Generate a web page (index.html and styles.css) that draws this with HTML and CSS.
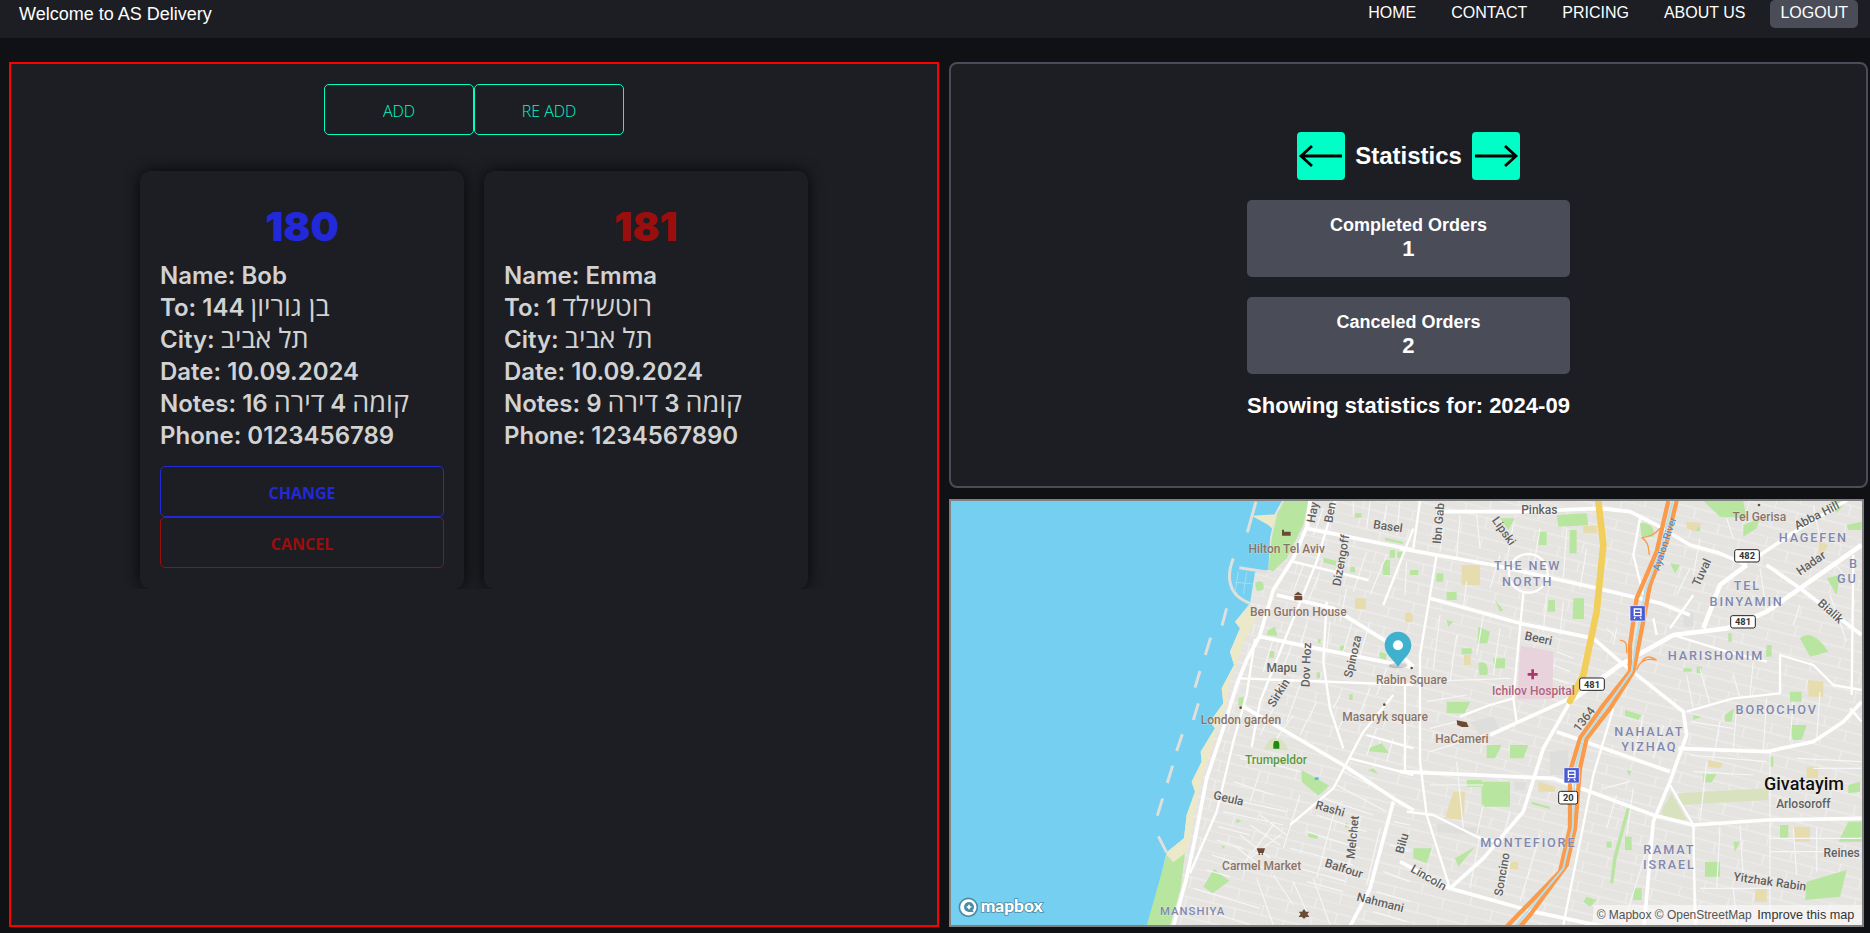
FILE: index.html
```html
<!DOCTYPE html>
<html lang="en">
<head>
    <meta charset="UTF-8">
    <meta name="viewport" content="width=device-width, initial-scale=1.0">
    <title>AS Delivery</title>
    <link rel="stylesheet" href="styles.css">
</head>
<body>
    <nav class="navbar">
        <h3 class="brand">Welcome to AS Delivery</h3>
        <div class="nav-links">
            <a href="#">HOME</a>
            <a href="#">CONTACT</a>
            <a href="#">PRICING</a>
            <a href="#">ABOUT US</a>
            <a href="#" class="logout">LOGOUT</a>
        </div>
    </nav>

    <main class="dashboard">
        <section class="orders-panel">
            <div class="order-actions">
                <button class="btn-add">ADD</button>
                <button class="btn-add">RE ADD</button>
            </div>
            <div class="orders">
                <article class="order-card">
                    <h2 class="order-id blue">180</h2>
                    <p>Name: Bob</p>
                    <p>To: <span dir="rtl"><span class="he">בן גוריון</span> 144</span></p>
                    <p>City: <span dir="rtl" class="he">תל אביב</span></p>
                    <p>Date: 10.09.2024</p>
                    <p>Notes: <span dir="rtl"><span class="he">קומה</span> 4 <span class="he">דירה</span> 16</span></p>
                    <p>Phone: 0123456789</p>
                    <div class="card-buttons">
                        <button class="btn-card blue">CHANGE</button>
                        <button class="btn-card red">CANCEL</button>
                    </div>
                </article>
                <article class="order-card">
                    <h2 class="order-id red">181</h2>
                    <p>Name: Emma</p>
                    <p>To: <span dir="rtl"><span class="he">רוטשילד</span> 1</span></p>
                    <p>City: <span dir="rtl" class="he">תל אביב</span></p>
                    <p>Date: 10.09.2024</p>
                    <p>Notes: <span dir="rtl"><span class="he">קומה</span> 3 <span class="he">דירה</span> 9</span></p>
                    <p>Phone: 1234567890</p>
                </article>
            </div>
        </section>

        <div class="side">
            <section class="stats-panel">
                <div class="stats-body">
                    <div class="stats-head">
                        <button class="arrow" aria-label="Previous month">
                            <svg viewBox="0 0 48 48"><path d="M45 24H4M15 14L4 24L15 34"/></svg>
                        </button>
                        <h2>Statistics</h2>
                        <button class="arrow" aria-label="Next month">
                            <svg viewBox="0 0 48 48"><path d="M3 24H44M33 14L44 24L33 34"/></svg>
                        </button>
                    </div>
                    <div class="stat-box">
                        <div class="stat-title">Completed Orders</div>
                        <div class="stat-value">1</div>
                    </div>
                    <div class="stat-box">
                        <div class="stat-title">Canceled Orders</div>
                        <div class="stat-value">2</div>
                    </div>
                    <p class="stats-note">Showing statistics for: 2024-09</p>
                </div>
            </section>

            <section class="map">
                <svg class="map-svg" viewBox="0 0 912 424" preserveAspectRatio="xMinYMin slice">
                    <defs>
                        <pattern id="blocks" width="150" height="60" patternUnits="userSpaceOnUse" patternTransform="rotate(14)">
                            <path class="block-line" d="M0 0H150M0 30H150M40 0V30M110 30V60"/>
                        </pattern>
                    </defs>
                    <g transform="translate(-11 -6) scale(.33333)">
                        <rect x="600" y="0" width="2300" height="1320" fill="url(#blocks)"/>

                        <!-- sea and coast -->
                        <path class="water" d="M0 0H1035L1005 55L990 130L985 225L945 232L930 325L885 380L900 400L870 470L882 510L845 580L850 625L810 680L825 700L782 770L785 800L755 860L765 890L740 960L732 1030L680 1072L655 1180L620 1300H0Z"/>
                        <path class="beach" d="M935 330L950 365L915 432L890 505L868 560L860 625L825 720L805 790L785 850L765 940L748 1040L735 1078L700 1102L680 1072L732 1030L740 960L765 890L755 860L785 800L782 770L825 700L810 680L850 625L845 580L882 510L870 470L900 400L885 380Z"/>
                        <path class="beach" d="M935 62L1012 58L995 100L985 90Z"/>
                        <path class="park" d="M1032 18H1105L1090 90L1040 190L1000 228L985 225L995 130L1012 55Z"/>
                        <path class="park" d="M735 1075L700 1102L680 1080L620 1292H690L722 1180Z"/>
                        <path class="wall" d="M948 20L922 112M880 190C860 240 860 300 930 325M898 218L985 232M860 340L846 392M812 428L796 480M780 528L765 578M775 625L760 675M727 718L710 768M698 812L682 864M668 910L652 962M655 1024L680 1072"/>
                        <path class="wall-thin" d="M895 230L885 292M920 232L910 298M885 262L935 266"/>

                        <!-- parks, left half -->
                        <path class="park" d="M1085 825L1168 872L1135 902L1085 860ZM790 1175L822 1122L868 1158L818 1195ZM1285 760L1325 745L1348 775L1282 768ZM1245 55H1265V68H1245ZM1335 128L1390 140L1388 147L1335 136ZM1150 188L1190 198L1186 212L1150 202ZM1330 195H1350V240H1328ZM1350 165H1365V188H1348ZM1372 170H1390V190H1372ZM1232 215H1245V232H1230ZM945 265C965 250 975 265 970 285L950 288ZM985 405L1005 395L1012 422L980 420ZM988 468H1002V488H988ZM1130 532H1140V550H1130ZM1228 598H1238V615H1228ZM895 610L910 605V632H895ZM1105 1014L1135 1018L1132 1032L1105 1026ZM1320 470L1340 478L1338 495L1318 488ZM1200 452H1214V466H1200ZM1134 432H1142V445H1134ZM1215 985H1225V998H1215ZM890 972L905 978L888 985ZM845 1050L856 1055L848 1062ZM1300 820L1315 838L1285 826Z"/>
                        <path class="park-pale" d="M985 738C1005 720 1030 728 1045 765H970Z"/>
                        <path class="sand" d="M1245 310H1278V342H1245ZM1398 352H1412V382H1398Z"/>
                        <ellipse class="lake" cx="1130" cy="851" rx="7" ry="4"/>

                        <!-- small streets, left half -->
                        <path class="street" d="M1240 20V60M1290 20L1280 100M1340 30L1330 110M1380 20L1370 120M1150 40L1120 120M1220 140L1180 250M1280 170L1240 290M1340 180L1290 300M1090 210L1060 290M1140 230L1100 330M1220 280L1200 380M1100 390L1080 450M1170 380L1160 470M1240 370L1210 470M1290 380L1260 480M1000 430L970 530M1060 440L1020 540M1020 560L990 640M1080 570L1040 680M1200 600L1180 640M1290 580L1250 680M1340 520L1310 600M1000 640L960 720M1060 660L1010 730M1130 620L1080 720M1230 640L1190 710M1310 700L1280 780M1360 730L1340 800M1000 810L900 790M1080 830L890 780M960 830L930 920M880 860L1000 900M860 910L1040 950M850 950L1030 990M835 995L930 1020M830 1035L910 1060M815 1080L880 1100M800 1125L870 1145M1150 910L1300 960M1130 960L1280 1010M1100 1010L1260 1060M1050 1060L1240 1110M1040 1110L1220 1160M1100 1160L1210 1190M1210 830L1350 900M1190 870L1340 950M1080 900L1030 1060M1180 960L1130 1150M1260 970L1220 1130M1320 1000L1280 1170M1000 990L900 1120M1020 1020L930 1090M960 960L1040 1020M930 990L1020 1050M900 1020L990 1090M880 1050L970 1120M760 1180L960 1240M750 1230L930 1290M1000 1140L1060 1230M1060 1160L1100 1250M1120 1150L1170 1290M950 1150L1000 1290M1330 1130L1410 1160M1310 1190L1410 1220M1300 1250L1400 1280M1360 980L1410 990M1350 1050L1410 1070"/>

                        <!-- main roads, left half -->
                        <path class="road" d="M1105 85L1060 190L1000 285L958 425L920 495L890 570L850 700L800 850L762 1045L738 1155L700 1295"/>
                        <path class="road thin" d="M945 432L935 500L920 600L880 740L830 950L750 1135M1185 18L1130 200L1040 420L960 620L935 755M1160 320L1150 500L1170 640L1210 760M1360 600L1270 710L1180 880L1050 990M1395 560V830M1280 720L1420 760M1230 790L1420 840M1060 200L1285 255M900 550L1420 570M1330 330L1420 100"/>
                        <path class="road" d="M1010 300L1180 340L1340 440L1420 515M960 425L1130 460L1420 518M910 635L1210 810L1360 910L1420 945M1110 18L1100 100L1420 165M1360 920L1290 1180L1230 1295"/>

                        <g transform="translate(1380 0)">
                            <!-- parks and blocks, right half -->
                            <path class="park" d="M470 60L560 55L565 90L475 95ZM520 310H552V372H518ZM445 315H465V350H443ZM510 105H530V175H508ZM415 110H440V150H415ZM300 70L345 70L325 105ZM110 235H130V260H108ZM140 290H170V315H140ZM30 225H55V240H30ZM235 395L270 410L262 445H232ZM280 490H315V520H282ZM235 505C255 495 268 510 262 540H238ZM185 460H215V478H185ZM140 375L160 380L145 395ZM285 315L310 345L300 350ZM140 620H210L195 655H140ZM260 750L305 750L285 790H260ZM330 750H385L370 790H330ZM245 860H330V935H245ZM200 855H245V875H200ZM40 1060H95L80 1105L40 1090ZM165 1090L225 1055L175 1115ZM395 920L450 935V942L395 928ZM560 1205L590 1215L570 1235L550 1220ZM620 1040H635V1058H620ZM675 1025H695V1065H675ZM700 1180H725V1215H700ZM915 1100H960V1145H915ZM675 645L725 660L715 675L675 662ZM680 825L695 828L688 842ZM910 838H950L935 862H910ZM880 660L905 665L880 675ZM975 660L1002 640L995 680H975ZM1170 690H1220L1205 735H1178ZM1170 590H1205V620H1170ZM1200 430C1225 405 1260 430 1285 470L1230 485ZM1280 250L1320 240L1310 300ZM1100 450H1115V485H1098ZM850 520H875V530H850ZM890 515H905V535H890ZM1345 980H1385V1040H1315ZM1140 990H1165V1030H1140ZM1220 1160L1340 1125L1320 1205L1215 1215ZM910 18H1030L1040 70L960 65ZM1030 90L1080 70L1070 100L1030 125ZM720 85C745 80 770 100 760 125L725 125ZM810 205L840 210L825 235ZM880 90H900V108H880ZM1340 90L1385 80V105H1345ZM1290 18H1340L1310 55ZM1108 785H1120V815H1108ZM1345 870L1380 860V890L1345 895ZM1000 1040L1020 1040L1005 1070ZM985 415H995V440H985Z"/>
                            <path class="park" d="M680 940L690 940L650 1090L640 1165L630 1165L640 1085Z"/>
                            <path class="park-pale" d="M835 895L1105 880V915L840 930Z"/>
                            <path class="park-pale" d="M785 945L815 895L860 975L790 970Z"/>
                            <path class="sand" d="M185 210H240V270H185ZM550 92H590V115H550ZM860 80L905 85L885 110L860 100ZM15 355H38V380H15ZM192 480H212V510H192ZM160 890L195 890L190 975L135 970ZM415 860L465 875V890H415ZM925 795L970 805L960 820L925 815ZM1220 815H1255V850H1220ZM1182 995H1230V1040H1182ZM1225 555L1270 560V605H1225ZM1065 1180H1100V1220H1065ZM330 1100H355V1122H330ZM1258 140L1285 150L1270 175H1255Z"/>
                            <path class="hospital" d="M362 452L460 470L458 612L352 612Z"/>
                            <path class="pad" d="M210 680L280 665L300 700L240 720ZM450 770L505 765V840H450ZM110 985L240 1000V1018L110 1012ZM850 350L880 350L880 395L850 395ZM340 860L380 860L375 885L345 885Z"/>

                            <!-- small streets, right half -->
                            <path class="street" d="M230 60L240 160M300 180L270 280M200 260L190 340M440 300L430 410M490 320L480 420M560 160L540 280M130 100L120 170M180 60L170 190M340 90L320 200M420 100L400 220M500 100L490 250M20 200L15 300M170 420L150 560M120 360L100 520M250 360L230 480M300 400L280 540M470 470L520 490M460 510L510 530M458 550L505 565M60 560L330 550M80 620L200 600M90 700L170 680M90 770L250 720M90 870L250 870M170 800L190 1000M250 930L230 1020M330 950L300 1060M240 1020L210 1180M330 1100L310 1190M420 1020L360 1220M620 400L650 430M650 400L640 450M610 880L690 860M650 900L620 1000M700 880L680 1020M730 660L700 790M790 690L760 790M760 1000L670 1290M880 1010L890 1290M920 800L900 980M960 680L940 790M1010 640L1000 760M1100 610L1090 770M1180 620L1170 740M1260 590L1250 730M870 780L1100 800M880 830L1060 840M870 680L1000 700M1000 540L1020 610M1060 500L1050 600M860 540L880 640M900 520L930 630M960 1000L950 1180M1020 990L1030 1150M1110 770V1290M1180 1000L1190 1140M1250 1000V1130M1110 1070H1385M1110 1030H1385M1190 790L1385 800M1240 820H1385M1000 1180L1010 1290M900 1180H1110M1290 300L1340 440M1200 330L1180 390M1080 220L1100 350M980 70L1000 130M900 130L880 240M870 220L830 300M1240 30L1260 130M1300 200L1340 250"/>

                            <!-- roundabout -->
                            <circle class="road thin nofill" cx="385" cy="235" r="58"/>

                            <!-- main roads, right half -->
                            <path class="road" d="M110 50L360 50L600 40L690 50L770 90L870 150L960 175L1040 210M0 160L110 180L280 210L590 280L780 325L870 360M90 310L360 385L580 430L660 500L850 650L860 720L810 860L760 980L732 1295M270 720L510 610M510 620L430 760L370 950L250 1090L150 1180M470 710L810 830M0 830L460 850L760 960L880 990L1100 975L1385 970M835 760L1100 770L1240 740L1330 680L1385 620M0 1100L150 1180L400 1250L610 1295M1050 200L1200 100L1350 10M1100 210L1200 280L1385 420"/>
                            <path class="road thin" d="M860 650L1000 610L1140 595L1140 480L1240 510L1300 570L1385 585M110 180L60 480L60 800L80 960L150 1180M60 18L40 160M370 295L340 610L350 680M720 70L700 180L730 300M760 370L770 420M810 400L880 300M810 870L880 990L885 1290M820 420L980 470L1100 500M640 640L580 840L490 1290M1350 640L1385 680M180 665L270 630L340 610M20 950L100 960L240 1030L290 1040M1360 180L1355 600"/>
                            <path class="road wide" d="M510 620L660 510L820 420L980 400L1100 350L1200 280L1385 150M1040 210L960 270L910 400"/>

                            <path class="yellow" d="M595 18L610 150L590 350L550 540L510 618"/>
                            <path class="motor" d="M805 18L770 170L710 310L690 450L690 530L610 630L540 730L510 830L510 1000L480 1130L320 1295"/>
                            <path class="motor" d="M830 18L800 140L750 270L720 430L700 530L630 640L560 730L540 820L525 1000L500 1110L390 1260L360 1295"/>
                            <path class="rail" d="M818 18L785 155L735 290L708 440L695 530L620 635L550 730L525 825L518 1000L490 1120L345 1295"/>
                            <path class="ramp" d="M725 128C760 125 770 110 780 100M725 128C745 140 745 155 748 180M660 436C680 435 680 450 680 475M770 495C740 490 720 495 710 525M770 495C745 480 735 485 725 500"/>

                            <!-- transit icons -->
                            <rect class="transit" x="690" y="332" width="46" height="46" rx="2"/>
                            <path class="transit-glyph" d="M703 342H723V362H703ZM703 352H723M706 366L702 372M720 366L724 372"/>
                            <rect class="transit" x="492" y="818" width="46" height="46" rx="2"/>
                            <path class="transit-glyph" d="M505 828H525V848H505ZM505 838H525M508 852L504 858M522 852L526 858"/>

                            <!-- hospital cross -->
                            <path class="cross" d="M398 523V553M383 538H413"/>

                            <!-- highway shields -->
                            <rect class="shield" x="1004" y="164" width="74" height="37" rx="6"/>
                            <text class="shield-text" x="1041" y="193">482</text>
                            <rect class="shield" x="992" y="362" width="74" height="37" rx="6"/>
                            <text class="shield-text" x="1029" y="391">481</text>
                            <rect class="shield" x="539" y="549" width="74" height="37" rx="6"/>
                            <text class="shield-text" x="576" y="578">481</text>
                            <rect class="shield" x="476" y="889" width="57" height="38" rx="6"/>
                            <text class="shield-text" x="505" y="918">20</text>

                            <!-- labels, right half -->
                            <text class="lb road-lb" x="418" y="56">Pinkas</text>
                            <text class="lb road-lb" transform="translate(128 86) rotate(-85)">Ibn Gab</text>
                            <text class="lb road-lb" transform="translate(302 115) rotate(55)">Lipski</text>
                            <text class="lb area" x="383" y="226">THE NEW</text>
                            <text class="lb area" x="383" y="272">NORTH</text>
                            <text class="lb road-lb" transform="translate(413 442) rotate(12)">Beeri</text>
                            <text class="lb hosp" x="400" y="599">Ichilov Hospital</text>
                            <text class="lb poi" x="186" y="744">HaCameri</text>
                            <text class="lb poi" x="1078" y="77">Tel Gerisa</text>
                            <text class="lb road-lb" transform="translate(1256 72) rotate(-27)">Abba Hill</text>
                            <text class="lb area" x="1240" y="140">HAGEFEN</text>
                            <text class="lb road-lb" transform="translate(916 237) rotate(-65)">Tuval</text>
                            <text class="lb road-lb" transform="translate(1240 214) rotate(-35)">Hadar</text>
                            <text class="lb area" x="1042" y="286">TEL</text>
                            <text class="lb area" x="1040" y="333">BINYAMIN</text>
                            <text class="lb road-lb" transform="translate(1284 357) rotate(42)">Bialik</text>
                            <text class="lb area" x="948" y="496">HARISHONIM</text>
                            <text class="lb area" x="1130" y="657">BOROCHOV</text>
                            <text class="lb area" x="748" y="722">NAHALAT</text>
                            <text class="lb area" x="748" y="768">YIZHAQ</text>
                            <text class="lb city" x="1212" y="885">Givatayim</text>
                            <text class="lb road-lb" x="1210" y="940">Arlosoroff</text>
                            <text class="lb area" x="385" y="1055">MONTEFIORE</text>
                            <text class="lb area" x="808" y="1076">RAMAT</text>
                            <text class="lb area" x="808" y="1121">ISRAEL</text>
                            <text class="lb road-lb" x="1325" y="1085">Reines</text>
                            <text class="lb road-lb" transform="translate(1108 1172) rotate(8)">Yitzhak Rabin</text>
                            <text class="lb road-lb" transform="translate(80 1158) rotate(30)">Lincoln</text>
                            <text class="lb road-lb" transform="translate(318 1140) rotate(-80)">Soncino</text>
                            <text class="lb road-lb" transform="translate(562 680) rotate(-52)">1364</text>
                            <text class="lb river" transform="translate(803 150) rotate(-72)">Ayalon River</text>
                            <text class="lb area" x="1362" y="218">B</text>
                            <text class="lb area" x="1342" y="265">GU</text>

                            <!-- attribution -->
                            <rect class="attrib-bg" x="580" y="1230" width="815" height="62"/>
                            <text class="attrib" x="590" y="1271">© Mapbox © OpenStreetMap</text>
                            <text class="attrib strong" x="1072" y="1271">Improve this map</text>
                        </g>

                        <!-- labels, left half -->
                        <text class="lb poi" x="1040" y="173">Hilton Tel Aviv</text>
                        <text class="lb poi" x="1075" y="364">Ben Gurion House</text>
                        <text class="lb road-lb" x="1025" y="531">Mapu</text>
                        <text class="lb road-lb" transform="translate(1111 510) rotate(-88)">Dov Hoz</text>
                        <text class="lb road-lb" transform="translate(1250 487) rotate(-77)">Spinoza</text>
                        <text class="lb road-lb" transform="translate(1215 198) rotate(-80)">Dizengoff</text>
                        <text class="lb road-lb" transform="translate(1026 600) rotate(-58)">Sirkin</text>
                        <text class="lb poi" x="903" y="688">London garden</text>
                        <text class="lb green" x="1008" y="808">Trumpeldor</text>
                        <text class="lb poi" x="1415" y="566">Rabin Square</text>
                        <text class="lb poi" x="1335" y="679">Masaryk square</text>
                        <text class="lb road-lb" transform="translate(863 922) rotate(13)">Geula</text>
                        <text class="lb road-lb" transform="translate(1167 953) rotate(16)">Rashi</text>
                        <text class="lb road-lb" transform="translate(1250 1028) rotate(-84)">Melchet</text>
                        <text class="lb road-lb" transform="translate(1398 1048) rotate(-75)">Bilu</text>
                        <text class="lb road-lb" transform="translate(1208 1132) rotate(18)">Balfour</text>
                        <text class="lb road-lb" transform="translate(1318 1234) rotate(14)">Nahmani</text>
                        <text class="lb poi" x="965" y="1125">Carmel Market</text>
                        <text class="lb area small" x="758" y="1259">MANSHIYA</text>
                        <text class="lb road-lb" transform="translate(1342 106) rotate(8)">Basel</text>
                        <text class="lb road-lb" transform="translate(1130 54) rotate(-80)">Hay</text>
                        <text class="lb road-lb" transform="translate(1182 54) rotate(-80)">Ben</text>

                        <!-- poi icons -->
                        <path class="icon" d="M1026 104H1032V110H1052V122H1026ZM1032 112H1050V117H1032Z"/>
                        <path class="icon" d="M1062 300L1074 290L1088 300ZM1063 302H1087V316H1063Z"/>
                        <path class="icon-green" d="M1000 746L1003 738H1015L1018 746V761H1000Z"/>
                        <circle class="icon" cx="902" cy="638" r="4"/>
                        <circle class="icon" cx="1333" cy="629" r="4"/>
                        <circle class="icon" cx="1415" cy="519" r="4"/>
                        <circle class="icon" cx="2457" cy="30" r="4"/>
                        <path class="icon" d="M950 1060H975L971 1074H955ZM956 1075H960V1080H956ZM965 1075H969V1080H965Z"/>
                        <path class="icon" d="M1550 676L1580 682L1586 696H1566L1552 690Z"/>
                        <path class="icon" d="M1092 1242L1098 1250H1108L1102 1257L1108 1266H1098L1092 1272L1086 1266H1076L1082 1257L1076 1250H1086Z"/>

                        <!-- marker -->
                        <ellipse class="pin-shadow" cx="1374" cy="512" rx="28" ry="8"/>
                        <path class="pin" d="M1374 516C1360 492 1334 478 1334 450C1334 428 1352 410 1374 410C1396 410 1414 428 1414 450C1414 478 1388 492 1374 516Z"/>
                        <circle class="pin-dot" cx="1374" cy="451" r="15"/>

                        <!-- mapbox logo -->
                        <circle class="logo-ring" cx="85" cy="1237" r="27"/>
                        <circle class="logo-mark" cx="87" cy="1236" r="15"/>
                        <path class="logo-mark" d="M92 1240L102 1252L84 1250Z"/>
                        <path class="logo-plus" d="M87 1229V1243M80 1236H94"/>
                        <text class="logo-text" x="122" y="1252">mapbox</text>
                    </g>
                </svg>
            </section>
        </div>
    </main>
</body>
</html>
```

FILE: styles.css
```css
* { box-sizing: border-box; }
body { margin: 0; height: 933px; overflow: hidden; background-color: #0f1115; color: #ffffff; font-family: "Liberation Sans", Arial, sans-serif; }

.navbar { height: 38px; background-color: #1c1e23; display: flex; justify-content: space-between; padding: 0 12px 0 19px; }
.brand { margin: 0; font-size: 18px; font-weight: normal; line-height: 28px; }
.nav-links { display: flex; gap: 15px; }
.nav-links a { height: 28px; padding: 0 10px; line-height: 26px; font-size: 16px; color: #ffffff; text-decoration: none; border-radius: 5px; }
.nav-links .logout { background-color: #4a4c57; }

.dashboard { display: grid; grid-template-columns: 930px 1fr; gap: 10px; padding: 24px 2px 6px 9px; height: 895px; }

.orders-panel { border: 2px solid #ff0000; background-color: #1c1e23; padding-top: 20px; }
.order-actions { display: flex; justify-content: center; }
.btn-add { width: 150px; height: 51px; background: none; border: 1px solid #00ffc3; border-radius: 5px; color: #00ffc3; font-family: "Open Sans", sans-serif; font-size: 16px; font-weight: 300; padding-top: 3px; }

.orders { display: flex; justify-content: center; gap: 20px; padding-top: 36px; overflow: hidden; font-family: Inter, "Liberation Sans", sans-serif; }
.order-card { width: 324px; height: 418px; padding: 23px 20px 20px; background-color: #1c1e23; border-radius: 10px; box-shadow: 0 0 15px rgba(0, 0, 0, 0.8); color: #d2d2d2; }
.order-card p { margin: 0; font-size: 24px; font-weight: 600; line-height: 32px; }
.order-card .he { font-family: "Open Sans", "Liberation Sans", sans-serif; font-size: 27px; font-weight: 400; line-height: 1; }
.order-id { margin: 0; font-size: 40px; font-weight: 900; line-height: 66px; text-align: center; }
.blue { color: #2229d8; }
.red { color: #9b0e0e; }
.card-buttons { margin-top: 14px; }
.btn-card { display: block; width: 100%; height: 51px; margin: 0; background: none; border: 1px solid currentColor; border-radius: 5px; font-family: "Open Sans", sans-serif; font-size: 16px; font-weight: 700; padding-top: 3px; }

.side { display: flex; flex-direction: column; gap: 11px; min-width: 0; }
.stats-panel { height: 426px; display: flex; justify-content: center; align-items: center; background-color: #1c1e23; border: 2px solid #4a4c57; border-radius: 8px; }
.stats-body { display: flex; flex-direction: column; width: max-content; }
.stats-head { display: flex; justify-content: center; align-items: center; gap: 10px; margin-bottom: 20px; }
.stats-head h2 { margin: 0; font-size: 24px; }
.arrow { width: 48px; height: 48px; padding: 0; background-color: #00ffc6; border: none; border-radius: 4px; }
.arrow svg { display: block; width: 48px; height: 48px; fill: none; stroke: #000000; stroke-width: 2.8; }
.stat-box { height: 77px; margin-bottom: 20px; padding: 15px 0; background-color: #4a4c57; border-radius: 5px; text-align: center; font-weight: bold; }
.stat-title { font-size: 18px; line-height: 21px; }
.stat-value { font-size: 22px; line-height: 26px; }
.stats-note { margin: -1px 0 0; font-size: 22px; font-weight: bold; line-height: 26px; }

.map { height: 428px; width: 915px; border: 2px solid #808080; overflow: hidden; background-color: #e6e4e0; }
.map-svg { display: block; width: 911px; height: 424px; }
.water { fill: #75cff0; }
.beach { fill: #ece9c8; }
.park { fill: #b8e6a0; }
.park-pale { fill: #d9e2bf; }
.sand { fill: #e6dcae; }
.hospital { fill: #e8d2dc; }
.pad { fill: #dedfdc; }
.lake { fill: #5db5e5; }
.wall { fill: none; stroke: #dfdfdc; stroke-width: 9; }
.wall-thin { fill: none; stroke: #a6dcf0; stroke-width: 3; }
.block-line { fill: none; stroke: #f1f1f1; stroke-width: 3; }
.street { fill: none; stroke: #f6f6f8; stroke-width: 3.5; }
.road { fill: none; stroke: #ffffff; stroke-width: 11; stroke-linejoin: round; }
.road.thin { stroke-width: 7; }
.road.wide { stroke-width: 14; }
.nofill { fill: none; }
.yellow { fill: none; stroke: #f2cf5d; stroke-width: 20; stroke-linecap: round; stroke-linejoin: round; }
.motor { fill: none; stroke: #fb9a4b; stroke-width: 13; stroke-linejoin: round; }
.rail { fill: none; stroke: #b7dfe9; stroke-width: 6; stroke-linejoin: round; }
.ramp { fill: none; stroke: #fb9a4b; stroke-width: 4; }
.transit { fill: #4a5ad0; stroke: #ffffff; stroke-width: 2; }
.transit-glyph { fill: none; stroke: #ffffff; stroke-width: 4; }
.cross { fill: none; stroke: #b2356a; stroke-width: 8; }
.shield { fill: #ffffff; stroke: #222222; stroke-width: 3; }
.shield-text { font-family: Roboto, sans-serif; font-size: 28px; font-weight: 700; fill: #333333; text-anchor: middle; }
.lb { font-family: Roboto, "Noto Sans", sans-serif; font-size: 36px; text-anchor: middle; font-weight: 500; stroke: #ffffff; stroke-opacity: 0.35; stroke-width: 3px; paint-order: stroke; }
.road-lb { fill: #5f5f5f; }
.poi { fill: #8a7468; }
.green { fill: #5a9a3a; }
.hosp { fill: #b0607a; }
.river { fill: #4a8fd0; font-size: 30px; }
.area { fill: #8088b0; font-size: 38px; letter-spacing: 5.5px; }
.area.small { font-size: 34px; letter-spacing: 3px; }
.city { fill: #111111; font-size: 54px; stroke: #ffffff; stroke-opacity: 0.6; }
.icon { fill: #6d4a36; }
.icon-green { fill: #1f8a12; }
.pin { fill: #3fb1ce; }
.pin-dot { fill: #ffffff; }
.pin-shadow { fill: #000000; opacity: 0.18; }
.attrib-bg { fill: #ffffff; opacity: 0.5; }
.attrib { font-family: "Liberation Sans", sans-serif; font-size: 36px; fill: #555555; }
.attrib.strong { fill: #333333; font-size: 38px; }
.logo-ring { fill: #ffffff; stroke: #4c8ca6; stroke-width: 5; }
.logo-mark { fill: #4c8ca6; }
.logo-plus { fill: none; stroke: #ffffff; stroke-width: 5; }
.logo-text { font-family: Lato, sans-serif; font-size: 52px; font-weight: 900; fill: #ffffff; stroke: #4c8ca6; stroke-width: 5px; paint-order: stroke; }
```
